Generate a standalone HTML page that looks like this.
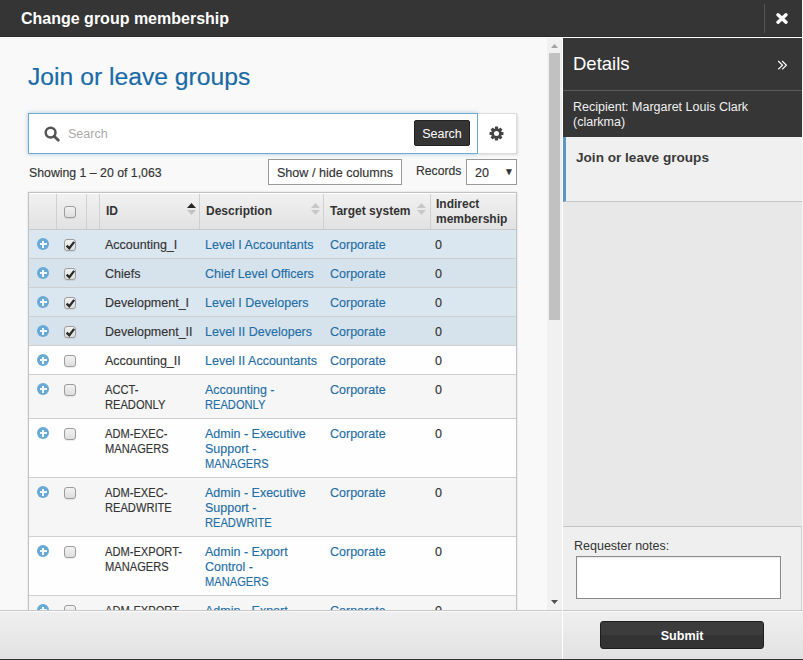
<!DOCTYPE html>
<html><head><meta charset="utf-8">
<style>
*{box-sizing:border-box;margin:0;padding:0}
html,body{width:803px;height:660px;overflow:hidden;background:#f9f9f9;font-family:"Liberation Sans",sans-serif;font-size:12px;color:#333}
.a{position:absolute}
#hdr{left:0;top:0;width:803px;height:37px;background:#353535;border-bottom:1px solid #2c2c2c}
#hdr .t{left:21px;top:10px;font-size:16px;font-weight:bold;color:#fff;line-height:18px;white-space:nowrap}
#hdr .sep{left:764px;top:4px;width:1px;height:29px;background:#555}
#wline{left:0;top:37px;width:803px;height:1px;background:#fff}
#main{left:0;top:38px;width:562px;height:572px;background:#f9f9f9;overflow:hidden}
#vline{left:562px;top:38px;width:1px;height:621px;background:#fff}
#rline{left:802px;top:0;width:1px;height:660px;background:#f4f4f4}
h1{-webkit-text-stroke:0.2px;position:absolute;left:28px;top:24.5px;font-size:24.7px;font-weight:normal;color:#196ba6;line-height:28px;white-space:nowrap}
#sb{left:547px;top:0;width:15px;height:572px;background:#f1f1f1}
#sbthumb{left:2px;top:15px;width:11px;height:267px;background:#c1c1c1}
#search{left:28px;top:75px;width:450px;height:41px;background:#fff;border:1px solid #72a9d0;box-shadow:0 0 4px rgba(80,150,200,.5)}
#gear{left:478px;top:75px;width:39px;height:41px;background:#fff;border:1px solid #dcdcdc;border-left:none;box-shadow:1px 1px 2px rgba(0,0,0,.12)}
.btn-dark{background:#353535;color:#fff;border:1px solid #222;border-radius:2px}
#showing{-webkit-text-stroke:0.15px;left:29px;top:128px;line-height:15px;white-space:nowrap;font-size:12.3px}
#shcol{-webkit-text-stroke:0.15px;left:268px;top:121px;width:134px;height:26px;border:1px solid #999;background:#fff;text-align:center;line-height:27px;white-space:nowrap;font-size:12.6px}
#rec{-webkit-text-stroke:0.15px;left:416px;top:126px;line-height:15px;font-size:12.2px}
#sel{-webkit-text-stroke:0.15px;left:466px;top:121px;width:51px;height:26px;border:1px solid #999;background:#fff}
#tbl{left:28px;top:154px;width:489px;height:460px;border:1px solid #c2c2c2;border-bottom:none;background:#fff;box-shadow:0 0 2px rgba(0,0,0,.14)}
#th{left:0;top:0;width:487px;height:37px;background:linear-gradient(#f1f1f1,#e2e2e2);border-top:1px solid #fff;border-bottom:1px solid #c8c8c8}
#th .s{position:absolute;top:0;width:1px;height:35px;background:#d0d0d0}
#th .h{position:absolute;font-weight:bold;line-height:15px;white-space:nowrap}
.row{position:absolute;left:0;width:487px;border-bottom:1px solid #cfcfcf}
.u{display:inline-block;transform:scaleX(.89);transform-origin:0 0}
.row .c{-webkit-text-stroke:0.15px;position:absolute;top:8px;line-height:15px;white-space:nowrap;font-size:12.5px}
.row .id{left:76px}
.row .ds{left:176px}
.row .ts{left:301px}
.row .ind{left:406px}
.plus{position:absolute;left:8px;top:8px;width:12px;height:12px;border-radius:50%;background:#68a9d6}
.plus:before{content:"";position:absolute;left:2.5px;top:5px;width:7px;height:2px;background:#f2f7fb}
.plus:after{content:"";position:absolute;left:5px;top:2.5px;width:2px;height:7px;background:#f2f7fb}
.cb{position:absolute;left:35px;top:9px;width:12px;height:12px;border:1px solid #9c9c9c;border-radius:3px;background:linear-gradient(#f2f2f2,#dedede);box-shadow:0 1px 1px rgba(0,0,0,.08)}
a{color:#1f6ea6;text-decoration:none}
#right{left:563px;top:38px;width:239px;height:572px;background:#e8e8e8}
#foot{left:0;top:610px;width:803px;height:50px;background:linear-gradient(#efefef,#e2e2e2);border-top:1px solid #c8c8c8;border-bottom:1px solid #333}
</style></head><body>
<div id="hdr" class="a"><div class="t a">Change group membership</div><div class="sep a"></div>
<svg class="a" style="left:776px;top:13px" width="12" height="11" viewBox="0 0 12 11"><path d="M2 1.8L10 9.2M10 1.8L2 9.2" stroke="#fff" stroke-width="3.4" stroke-linecap="round"/></svg>
</div>
<div id="wline" class="a"></div>
<div id="main" class="a">
<h1>Join or leave groups</h1>
<div id="search" class="a">
<svg class="a" style="left:15px;top:12px" width="16" height="16" viewBox="0 0 16 16"><circle cx="6.6" cy="6.6" r="4.9" fill="none" stroke="#555" stroke-width="2.5"/><path d="M10.2 10.2L14.3 14.3" stroke="#555" stroke-width="2.8" stroke-linecap="round"/></svg>
<div class="a" style="left:39px;top:13px;color:#aaa;font-size:12.5px;line-height:15px">Search</div>
<div class="a btn-dark" style="left:385px;top:6px;width:56px;height:26px;line-height:26px;text-align:center;font-size:12.5px">Search</div>
</div>
<div id="gear" class="a"><svg class="a" style="left:11px;top:12px" width="15" height="15" viewBox="0 0 16 16"><g fill="#444"><circle cx="8" cy="8" r="5.6"/><rect x="6.3" y="0.6" width="3.4" height="14.8" rx="0.4"/><rect x="0.6" y="6.3" width="14.8" height="3.4" rx="0.4"/><rect x="6.3" y="0.6" width="3.4" height="14.8" rx="0.4" transform="rotate(45 8 8)"/><rect x="6.3" y="0.6" width="3.4" height="14.8" rx="0.4" transform="rotate(-45 8 8)"/></g><circle cx="8" cy="8" r="2.7" fill="#fff"/></svg></div>
<div id="showing" class="a">Showing 1 – 20 of 1,063</div>
<div id="shcol" class="a">Show / hide columns</div>
<div id="rec" class="a">Records</div>
<div id="sel" class="a"><span class="a" style="left:8px;top:6px;line-height:15px;font-size:12.5px">20</span><span class="a" style="left:37px;top:4px;font-size:10px;line-height:15px">▼</span></div>
<div id="tbl" class="a">
<div id="th" class="a">
<div class="s" style="left:27px"></div><div class="s" style="left:57px"></div><div class="s" style="left:70px"></div><div class="s" style="left:170px"></div><div class="s" style="left:294px"></div><div class="s" style="left:401px"></div>
<div class="cb" style="top:12px"></div>
<div class="h" style="left:77px;top:10px">ID</div><svg class="a" style="left:158px;top:9px" width="9" height="12" viewBox="0 0 9 12"><path d="M0 5L4.5 0L9 5Z" fill="#252525"/><path d="M0 7L4.5 12L9 7Z" fill="#c2c2c2"/></svg><svg class="a" style="left:282px;top:9px" width="9" height="12" viewBox="0 0 9 12"><path d="M0 5L4.5 0L9 5Z" fill="#c8c8c8"/><path d="M0 7L4.5 12L9 7Z" fill="#c8c8c8"/></svg><svg class="a" style="left:388px;top:9px" width="9" height="12" viewBox="0 0 9 12"><path d="M0 5L4.5 0L9 5Z" fill="#c8c8c8"/><path d="M0 7L4.5 12L9 7Z" fill="#c8c8c8"/></svg>
<div class="h" style="left:177px;top:10px">Description</div>
<div class="h" style="left:301px;top:10px">Target system</div>
<div class="h" style="left:407px;top:3px">Indirect<br>membership</div>
</div>
<div class="row" style="top:37px;height:29px;background:#dbe7f0"><div class="plus"></div><div class="cb"><svg class="a" style="left:0;top:0" width="11" height="11" viewBox="0 0 11 11"><path d="M1.6 5.6L4.3 8.2L9.2 1.9" fill="none" stroke="#2a2a2a" stroke-width="2.3"/></svg></div><div class="c id">Accounting_I</div><div class="c ds"><a>Level I Accountants</a></div><div class="c ts"><a>Corporate</a></div><div class="c ind">0</div></div>
<div class="row" style="top:66px;height:29px;background:#d7e3ec"><div class="plus"></div><div class="cb"><svg class="a" style="left:0;top:0" width="11" height="11" viewBox="0 0 11 11"><path d="M1.6 5.6L4.3 8.2L9.2 1.9" fill="none" stroke="#2a2a2a" stroke-width="2.3"/></svg></div><div class="c id">Chiefs</div><div class="c ds"><a>Chief Level Officers</a></div><div class="c ts"><a>Corporate</a></div><div class="c ind">0</div></div>
<div class="row" style="top:95px;height:29px;background:#dbe7f0"><div class="plus"></div><div class="cb"><svg class="a" style="left:0;top:0" width="11" height="11" viewBox="0 0 11 11"><path d="M1.6 5.6L4.3 8.2L9.2 1.9" fill="none" stroke="#2a2a2a" stroke-width="2.3"/></svg></div><div class="c id">Development_I</div><div class="c ds"><a>Level I Developers</a></div><div class="c ts"><a>Corporate</a></div><div class="c ind">0</div></div>
<div class="row" style="top:124px;height:29px;background:#d7e3ec"><div class="plus"></div><div class="cb"><svg class="a" style="left:0;top:0" width="11" height="11" viewBox="0 0 11 11"><path d="M1.6 5.6L4.3 8.2L9.2 1.9" fill="none" stroke="#2a2a2a" stroke-width="2.3"/></svg></div><div class="c id">Development_II</div><div class="c ds"><a>Level II Developers</a></div><div class="c ts"><a>Corporate</a></div><div class="c ind">0</div></div>
<div class="row" style="top:153px;height:29px;background:#fefefe"><div class="plus"></div><div class="cb"></div><div class="c id">Accounting_II</div><div class="c ds"><a>Level II Accountants</a></div><div class="c ts"><a>Corporate</a></div><div class="c ind">0</div></div>
<div class="row" style="top:182px;height:44px;background:#f6f6f6"><div class="plus"></div><div class="cb"></div><div class="c id"><span class="u">ACCT-</span><br><span class="u">READONLY</span></div><div class="c ds"><a>Accounting -<br><span class="u">READONLY</span></a></div><div class="c ts"><a>Corporate</a></div><div class="c ind">0</div></div>
<div class="row" style="top:226px;height:59px;background:#fefefe"><div class="plus"></div><div class="cb"></div><div class="c id"><span class="u">ADM-EXEC-</span><br><span class="u">MANAGERS</span></div><div class="c ds"><a>Admin - Executive<br>Support -<br><span class="u">MANAGERS</span></a></div><div class="c ts"><a>Corporate</a></div><div class="c ind">0</div></div>
<div class="row" style="top:285px;height:59px;background:#f6f6f6"><div class="plus"></div><div class="cb"></div><div class="c id"><span class="u">ADM-EXEC-</span><br><span class="u">READWRITE</span></div><div class="c ds"><a>Admin - Executive<br>Support -<br><span class="u">READWRITE</span></a></div><div class="c ts"><a>Corporate</a></div><div class="c ind">0</div></div>
<div class="row" style="top:344px;height:59px;background:#fefefe"><div class="plus"></div><div class="cb"></div><div class="c id"><span class="u">ADM-EXPORT-</span><br><span class="u">MANAGERS</span></div><div class="c ds"><a>Admin - Export<br>Control -<br><span class="u">MANAGERS</span></a></div><div class="c ts"><a>Corporate</a></div><div class="c ind">0</div></div>
<div class="row" style="top:403px;height:59px;background:#f6f6f6"><div class="plus"></div><div class="cb"></div><div class="c id"><span class="u">ADM-EXPORT-</span><br><span class="u">READONLY</span></div><div class="c ds"><a>Admin - Export<br>Control -<br><span class="u">READONLY</span></a></div><div class="c ts"><a>Corporate</a></div><div class="c ind">0</div></div>
</div>
<div id="sb" class="a"><div id="sbthumb" class="a"></div><svg class="a" style="left:4px;top:6px" width="7" height="4" viewBox="0 0 7 4"><path d="M0 4L3.5 0L7 4Z" fill="#a3a3a3"/></svg><svg class="a" style="left:4px;top:562px" width="7" height="4" viewBox="0 0 7 4"><path d="M0 0L3.5 4L7 0Z" fill="#505050"/></svg></div>
</div>
<div id="vline" class="a"></div>
<div id="right" class="a">
<div class="a" style="left:0;top:0;width:239px;height:53px;background:#363636;border-bottom:1px solid #5a5a5a"></div>
<div class="a" style="left:10px;top:15px;font-size:18.5px;line-height:22px;color:#fff">Details</div>
<svg class="a" style="left:213.5px;top:21.5px" width="12" height="11" viewBox="0 0 12 11"><path d="M1.2 1L5.5 5.2L1.2 9.4M5.1 1L9.4 5.2L5.1 9.4" fill="none" stroke="#fff" stroke-width="1.2"/></svg>
<div class="a" style="left:0;top:53px;width:239px;height:46px;background:#363636"></div>
<div class="a" style="left:10px;top:62px;font-size:12.5px;line-height:15px;color:#f0f0f0;white-space:nowrap">Recipient: Margaret Louis Clark<br>(clarkma)</div>
<div class="a" style="left:0;top:99px;width:239px;height:65px;background:#f0f0f0;border-left:3px solid #5897c6;border-bottom:1px solid #c6c6c6"></div>
<div class="a" style="left:13px;top:112px;font-size:13.6px;font-weight:bold;line-height:16px;color:#3a3a3a;white-space:nowrap">Join or leave groups</div>
<div class="a" style="left:0;top:488px;width:239px;height:84px;background:#efefef;border-top:1px solid #c4c4c4;border-right:1px solid #cfcfcf"></div>
<div class="a" style="left:11px;top:501px;font-size:12.5px;line-height:15px;color:#333;white-space:nowrap">Requester notes:</div>
<div class="a" style="left:13px;top:518px;width:205px;height:43px;background:#fff;border:1px solid #8a8a8a;box-shadow:inset 0 1px 2px rgba(0,0,0,.1)"></div>
</div>
<div id="rline" class="a"></div>
<div id="foot" class="a">
<div class="a" style="left:0;top:0;width:803px;height:1px;background:#fafafa"></div>
<div class="a" style="left:562px;top:-1px;width:1px;height:49px;background:#fff"></div>
<div class="a btn-dark" style="left:600px;top:10px;width:164px;height:28px;border-radius:3px;border:1px solid #1e1e1e;background:linear-gradient(#3c3c3c 50%,#333 50%);font-weight:bold;font-size:12.6px;line-height:28px;text-align:center">Submit</div>
</div>
</body></html>
